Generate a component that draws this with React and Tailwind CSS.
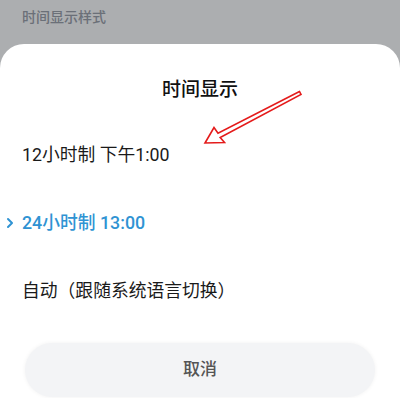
import React from 'react';

const font = { fontFamily: 'Roboto, "Noto Sans CJK SC", "Noto Sans", sans-serif' };

const options = [
  { label: '12小时制 下午1:00', active: false },
  { label: '24小时制 13:00', active: true },
  { label: '自动（跟随系统语言切换）', active: false },
];

export default function App() {
  return (
    <div className="relative w-[400px] h-[398px] overflow-hidden bg-[#acaeb0]" style={font}>
      {/* dimmed settings page behind the sheet */}
      <div className="h-[44px] px-[22px] pt-[6px] text-[14px] leading-[22px] font-medium text-[#6b7078]">
        时间显示样式
      </div>

      {/* bottom sheet */}
      <div className="relative bg-white rounded-t-[24px] h-[354px] flex flex-col">
        <h2 className="pt-[32px] h-[60px] text-center text-[19px] leading-[28px] font-medium text-[#111]">
          时间显示
        </h2>

        <div className="mt-[17px] flex flex-col">
          {options.map((o) => (
            <div key={o.label} className="relative h-[68px] flex items-center pl-[22px]">
              {o.active && (
                <svg className="absolute left-[6px] top-1/2 -translate-y-1/2" width="8" height="12" viewBox="0 0 8 12">
                  <polyline points="2,2 6,6 2,10" fill="none" stroke="#2f93d3" strokeWidth="2" strokeLinecap="round" strokeLinejoin="round" />
                </svg>
              )}
              <span className={`text-[17.8px] leading-[24px] ${o.active ? 'text-[#2f93d3] font-medium' : 'text-[#1a1a1a]'}`}>
                {o.label}
              </span>
            </div>
          ))}
        </div>

        <div className="mt-[18px] mx-[25px]">
          <button className="w-full h-[54px] rounded-full bg-[#f3f4f6] shadow-[0_0_4px_rgba(0,0,0,0.06)] text-[17px] font-medium text-[#555]">
            取消
          </button>
        </div>
      </div>

      {/* red annotation arrow */}
      <svg className="absolute left-0 top-0 pointer-events-none" width="400" height="398" viewBox="0 0 400 398">
        <polygon
          points="299.5,91.5 218,133.2 214,127.5 205,143 224.5,142.5 220.2,137.6 301,94.5"
          fill="none"
          stroke="#e41b1b"
          strokeWidth="1.6"
          strokeLinejoin="miter"
        />
      </svg>
    </div>
  );
}
